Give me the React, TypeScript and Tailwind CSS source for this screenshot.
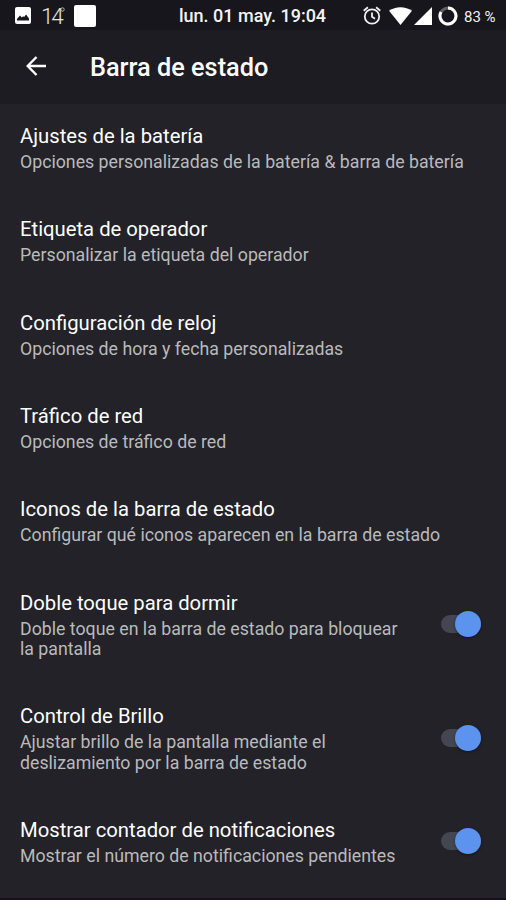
import React, { useState } from "react";

interface Setting {
  title: string;
  summary: string[];
  toggle?: boolean;
}

const settings: Setting[] = [
  {
    title: "Ajustes de la batería",
    summary: ["Opciones personalizadas de la batería & barra de batería"],
  },
  {
    title: "Etiqueta de operador",
    summary: ["Personalizar la etiqueta del operador"],
  },
  {
    title: "Configuración de reloj",
    summary: ["Opciones de hora y fecha personalizadas"],
  },
  { title: "Tráfico de red", summary: ["Opciones de tráfico de red"] },
  {
    title: "Iconos de la barra de estado",
    summary: ["Configurar qué iconos aparecen en la barra de estado"],
  },
  {
    title: "Doble toque para dormir",
    summary: ["Doble toque en la barra de estado para bloquear", "la pantalla"],
    toggle: true,
  },
  {
    title: "Control de Brillo",
    summary: [
      "Ajustar brillo de la pantalla mediante el",
      "deslizamiento por la barra de estado",
    ],
    toggle: true,
  },
  {
    title: "Mostrar contador de notificaciones",
    summary: ["Mostrar el número de notificaciones pendientes"],
    toggle: true,
  },
];

const StatusBar: React.FC = () => {
  return (
    <div className="grid h-[30px] shrink-0 grid-cols-[179px_148px_1fr] items-center bg-[#16161c] text-white">
      <div className="flex h-[30px] items-center pl-[15px]">
        <svg width="16" height="17" viewBox="0 0 16 17">
          <rect width="16" height="17" rx="2" fill="#fff" />
          <path
            d="M2 13.5v-1.5l3-3.5 1.8 2 1.3-1.3 1 .8 2-2.5L14 11.500v2z"
            fill="#16161c"
          />
        </svg>
        <span className="ml-[10px] w-[18px] text-[22.5px] leading-[30px] font-light tracking-[-2.2px] text-[#e4e4e4]">
          14
        </span>
        <svg className="ml-[1px] -mt-[13px]" width="5" height="5" viewBox="0 0 5 5">
          <circle cx="2.5" cy="2.5" r="1.7" fill="none" stroke="#c4c4c6" strokeWidth="0.9" />
        </svg>
        <div className="ml-[9px] h-[22px] w-[22px] rounded-[2px] bg-white" />
      </div>
      <span className="pt-[1px] text-[18px] leading-[30px] font-medium whitespace-nowrap text-[#f4f4f4]">
        lun. 01 may. 19:04
      </span>
      <div className="flex h-[30px] items-center">
        <svg
          className="ml-[36px] shrink-0"
          width="18"
          height="19"
          viewBox="0 0 18 19"
          fill="none"
          stroke="#f0f0f0"
          strokeWidth="1.8"
        >
          <circle cx="9" cy="10.5" r="7.2" />
          <path d="M.7 4.7 4.9 1.2M17.3 4.7l-4.200-3.500M9 6.5v4.3l3 1.9" />
        </svg>
        <svg className="ml-[8px] shrink-0" width="23" height="18" viewBox="0 0 23 18">
          <path d="M0 3.7C6.5-1 16.5-1 23 3.7L11.5 18z" fill="#fff" />
        </svg>
        <svg className="ml-[2px] shrink-0" width="18" height="18" viewBox="0 0 18 18">
          <path d="M18 0v18H0z" fill="#fff" />
        </svg>
        <svg
          className="ml-[6px] shrink-0"
          width="20"
          height="20"
          viewBox="0 0 20 20"
          fill="none"
          strokeWidth="3"
        >
          <circle cx="10" cy="10" r="8" stroke="#606064" />
          <path d="M10 2a8 8 0 1 1-7 4.1" stroke="#fff" />
        </svg>
        <span className="ml-[6px] pt-[2px] text-[15px] leading-[28px] whitespace-nowrap text-[#f0f0f0]">
          83 %
        </span>
      </div>
    </div>
  );
};

const App: React.FC = () => {
  const [enabled, setEnabled] = useState<boolean[]>(settings.map(() => true));

  const handleToggle = (index: number): void => {
    setEnabled((prev) => prev.map((on, i) => (i === index ? !on : on)));
  };

  return (
    <div className="flex h-[900px] w-[506px] flex-col overflow-hidden bg-[#222228] font-[Roboto,sans-serif]">
      <StatusBar />
      <header className="flex h-[74px] shrink-0 items-center bg-[#1c1c22] text-white">
        <button type="button" aria-label="Atrás" className="ml-[26px] -mt-[2px]">
          <svg
            width="20"
            height="20"
            viewBox="0 0 20 20"
            fill="none"
            stroke="#fff"
            strokeWidth="2.4"
          >
            <path d="M20 10H2M10.5 1 1.7 10l8.8 9" />
          </svg>
        </button>
        <h1 className="ml-[44px] pt-[2px] text-[25.3px] leading-[30px] font-medium">
          Barra de estado
        </h1>
      </header>

      <main className="min-h-0 flex-1 overflow-hidden">
        {settings.map((item, index) => (
          <div
            key={item.title}
            className="flex items-center justify-between pt-[20.2px] pr-[25px] pb-[24.6px] pl-[20px]"
          >
            <div>
              <h2 className="mb-[4px] text-[20.25px] leading-[24px] text-white">
                {item.title}
              </h2>
              {item.summary.map((line) => (
                <p
                  key={line}
                  className="text-[17.74px] leading-[20.5px] whitespace-nowrap text-[#bababc]"
                >
                  {line}
                </p>
              ))}
            </div>
            {item.toggle && (
              <button
                type="button"
                role="switch"
                aria-label={item.title}
                aria-checked={enabled[index]}
                onClick={() => handleToggle(index)}
                className={`-mt-[2px] flex h-[18px] w-[40px] shrink-0 items-center rounded-full bg-[#444752] ${
                  enabled[index] ? "justify-end" : "justify-start"
                }`}
              >
                <span className="h-[26px] w-[26px] shrink-0 rounded-full bg-[#5b93ef] shadow-[0_1px_3px_rgba(0,0,0,0.4)]" />
              </button>
            )}
          </div>
        ))}
      </main>
      <div className="h-[2px] shrink-0 bg-[#18101c]" />
    </div>
  );
};

export default App;
